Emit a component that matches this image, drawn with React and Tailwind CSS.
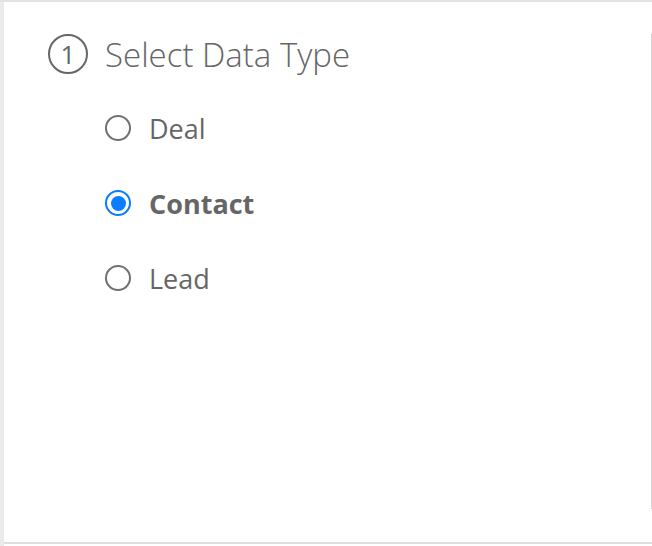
import { useState } from 'react';

const options = ['Deal', 'Contact', 'Lead'];

const Radio = ({ checked }) => (
  <span
    className={`flex h-[26px] w-[26px] shrink-0 items-center justify-center rounded-full border-2 ${
      checked ? 'border-[#0a7cff] border-[2.5px]' : 'border-[#707070]'
    }`}
  >
    {checked && <span className="h-[15px] w-[15px] rounded-full bg-[#0a7cff]" />}
  </span>
);

const App = () => {
  const [selected, setSelected] = useState('Contact');

  return (
    <div
      className="flex h-[546px] w-[652px] flex-col bg-white text-[#666666]"
      style={{ fontFamily: '"Open Sans", "Liberation Sans", sans-serif' }}
    >
      <div className="flex flex-1 border-t-2 border-[#e2e2e2]">
        {/* left gutter */}
        <div className="w-[4px] shrink-0 bg-[#ebebeb]" />

        <div className="flex flex-1 flex-col">
          <div className="flex flex-1">
            <div className="flex-1 pl-[44px] pt-[32px]">
              <div className="flex items-center gap-[17px]">
                <span className="flex h-[40px] w-[40px] items-center justify-center rounded-full border-2 border-[#666666] text-[26px] font-normal leading-none">
                  1
                </span>
                <h1 className="text-[33px] font-light leading-none">Select Data Type</h1>
              </div>

              <div className="mt-[41px] flex flex-col gap-[49px] pl-[57px]">
                {options.map((opt) => (
                  <button
                    key={opt}
                    type="button"
                    onClick={() => setSelected(opt)}
                    className="flex h-[26px] items-center gap-[18px] text-left"
                  >
                    <Radio checked={selected === opt} />
                    <span
                      className={`text-[27px] leading-none ${selected === opt ? 'font-bold' : 'font-normal'}`}
                    >
                      {opt}
                    </span>
                  </button>
                ))}
              </div>
            </div>

            {/* right panel edge */}
            <div className="flex w-[1px] shrink-0 flex-col pt-[32px] pb-[33px]">
              <div className="flex-1 bg-[#d4d4d4]" />
            </div>
          </div>

          <div className="h-[2px] bg-[#dedede]" />
          <div className="h-[2px]" />
        </div>
      </div>
    </div>
  );
};

export default App;
